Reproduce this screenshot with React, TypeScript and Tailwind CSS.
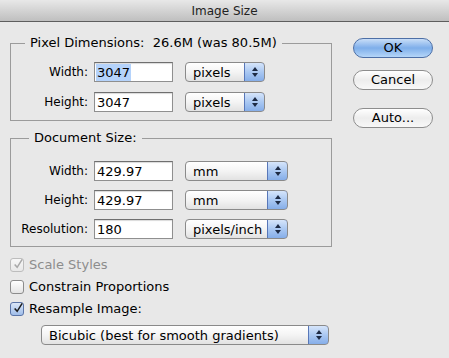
import React from 'react';

const font = { fontFamily: '"DejaVu Sans", "Liberation Sans", sans-serif' };

function Arrows() {
  return (
    <svg width="8" height="12" viewBox="0 0 8 12">
      <path d="M4 1 L7 5 L1 5 Z" fill="#1d2a44" />
      <path d="M4 11 L7 7 L1 7 Z" fill="#1d2a44" />
    </svg>
  );
}

function Popup({ value, width }: { value: string; width: string }) {
  return (
    <div
      className={`${width} h-[20px] flex rounded-[4px] border border-[#8a8a8a] overflow-hidden bg-gradient-to-b from-white via-[#f4f4f4] to-[#e2e2e2]`}
    >
      <div className="flex-1 pl-[7px] flex items-center text-[13px] text-black leading-none">{value}</div>
      <div className="w-[21px] flex items-center justify-center -my-px -mr-px border border-[#5877b8] rounded-r-[4px] bg-gradient-to-b from-[#d6e5fa] via-[#aac8f2] to-[#86aee9]">
        <Arrows />
      </div>
    </div>
  );
}

function Field({ value, selected }: { value: string; selected?: boolean }) {
  return (
    <div className="w-[79px] h-[20px] border border-[#8f8f8f] border-t-[#6f6f6f] bg-white flex items-center pl-[1px] text-[13px] text-black leading-none shadow-[inset_0_1px_1px_rgba(0,0,0,0.15)]">
      <span className={selected ? 'bg-[#b5d3fb] px-px py-[2px]' : 'px-px'}>{value}</span>
    </div>
  );
}

function Row({ label, value, unit, unitWidth, selected }: { label: string; value: string; unit: string; unitWidth: string; selected?: boolean }) {
  return (
    <div className="flex items-center h-[20px]">
      <div className="w-[83px] text-right text-[12px] text-black pr-[6px] whitespace-nowrap">{label}</div>
      <Field value={value} selected={selected} />
      <div className="w-[12px]" />
      <Popup value={unit} width={unitWidth} />
    </div>
  );
}

function Check({ state, label }: { state: 'on' | 'off' | 'disabled'; label: string }) {
  return (
    <div className="flex items-center h-[22px]">
      <div
        className={
          state === 'on'
            ? 'w-[14px] h-[14px] rounded-[3px] border border-[#5a74a8] bg-gradient-to-b from-[#dbe7f8] to-[#9fbde9] flex items-center justify-center'
            : state === 'off'
            ? 'w-[14px] h-[14px] rounded-[3px] border border-[#8c8c8c] bg-gradient-to-b from-white to-[#e4e4e4]'
            : 'w-[14px] h-[14px] rounded-[3px] border border-[#bdbdbd] bg-gradient-to-b from-[#f7f7f7] to-[#e8e8e8] flex items-center justify-center'
        }
      >
        {state !== 'off' && (
          <svg width="12" height="12" viewBox="0 0 12 12" className="-mt-[3px] ml-[2px]">
            <path
              d="M2 6.5 L5 10 L11 0.5"
              fill="none"
              stroke={state === 'on' ? '#1c1c1c' : '#a8a8a8'}
              strokeWidth="1.8"
            />
          </svg>
        )}
      </div>
      <span className={`ml-[5px] text-[13px] ${state === 'disabled' ? 'text-[#8d8d8d]' : 'text-black'}`}>{label}</span>
    </div>
  );
}

function Button({ label, primary }: { label: string; primary?: boolean }) {
  return (
    <div
      className={
        primary
          ? 'w-[80px] h-[20px] rounded-full border border-[#4d6fa6] bg-gradient-to-b from-[#c9def7] via-[#7eaeea] to-[#b5d6f8] flex items-center justify-center text-[13px] text-black'
          : 'w-[80px] h-[20px] rounded-full border border-[#8d8d8d] bg-gradient-to-b from-white via-[#ededed] to-[#f8f8f8] flex items-center justify-center text-[13px] text-black'
      }
    >
      {label}
    </div>
  );
}

export default function App() {
  return (
    <div className="w-[449px] h-[358px] bg-[#e8e8e8] overflow-hidden" style={font}>
      {/* Title bar */}
      <div className="h-[22px] bg-gradient-to-b from-[#e8e8e8] to-[#bfbfbf] border-b border-[#5e5e5e] flex items-center justify-center text-[12px] text-[#222]">
        Image Size
      </div>

      <div className="flex">
        {/* Left column */}
        <div className="ml-[10px] w-[322px]">
          <fieldset className="mt-[13px] border border-[#9b9b9b] pt-[11px] pb-[8px] flex flex-col gap-[10px]">
            <legend className="ml-[14px] px-[5px] text-[13px] leading-[16px] text-black">
              Pixel Dimensions:&nbsp; 26.6M (was 80.5M)
            </legend>
            <Row label="Width:" value="3047" unit="pixels" unitWidth="w-[80px]" selected />
            <Row label="Height:" value="3047" unit="pixels" unitWidth="w-[80px]" />
          </fieldset>

          <fieldset className="mt-[9px] border border-[#9b9b9b] pt-[15px] pb-[7px] flex flex-col gap-[9px]">
            <legend className="ml-[18px] px-[5px] text-[13px] leading-[16px] text-black">Document Size:</legend>
            <Row label="Width:" value="429.97" unit="mm" unitWidth="w-[103px]" />
            <Row label="Height:" value="429.97" unit="mm" unitWidth="w-[103px]" />
            <Row label="Resolution:" value="180" unit="pixels/inch" unitWidth="w-[103px]" />
          </fieldset>

          <div className="mt-[7px] flex flex-col">
            <Check state="disabled" label="Scale Styles" />
            <Check state="off" label="Constrain Proportions" />
            <Check state="on" label="Resample Image:" />
          </div>

          <div className="mt-[5px] ml-[31px]">
            <Popup value="Bicubic (best for smooth gradients)" width="w-[288px]" />
          </div>
        </div>

        {/* Right column */}
        <div className="ml-[21px] mt-[16px] flex flex-col">
          <Button label="OK" primary />
          <div className="h-[12px]" />
          <Button label="Cancel" />
          <div className="h-[18px]" />
          <Button label="Auto..." />
        </div>
      </div>
    </div>
  );
}
